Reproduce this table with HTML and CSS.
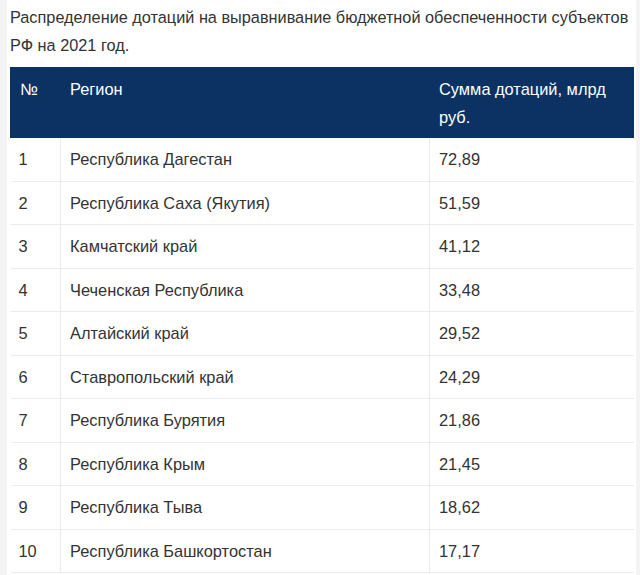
FILE: index.html
```html
<!DOCTYPE html>
<html lang="ru">
<head>
<meta charset="utf-8">
<link rel="stylesheet" href="styles.css">
</head>
<body>
<div class="page">
  <p class="lead">Распределение дотаций на выравнивание бюджетной обеспеченности субъектов РФ на 2021 год.</p>
  <table class="data">
    <thead>
      <tr><th class="c-num">№</th><th class="c-reg">Регион</th><th class="c-sum">Сумма дотаций, млрд руб.</th></tr>
    </thead>
    <tbody>
      <tr><td>1</td><td>Республика Дагестан</td><td>72,89</td></tr>
      <tr><td>2</td><td>Республика Саха (Якутия)</td><td>51,59</td></tr>
      <tr><td>3</td><td>Камчатский край</td><td>41,12</td></tr>
      <tr><td>4</td><td>Чеченская Республика</td><td>33,48</td></tr>
      <tr><td>5</td><td>Алтайский край</td><td>29,52</td></tr>
      <tr><td>6</td><td>Ставропольский край</td><td>24,29</td></tr>
      <tr><td>7</td><td>Республика Бурятия</td><td>21,86</td></tr>
      <tr><td>8</td><td>Республика Крым</td><td>21,45</td></tr>
      <tr><td>9</td><td>Республика Тыва</td><td>18,62</td></tr>
      <tr><td>10</td><td>Республика Башкортостан</td><td>17,17</td></tr>
    </tbody>
  </table>
</div>
</body>
</html>
```
FILE: styles.css
```css
html, body {
  margin: 0;
  padding: 0;
  background: #f4f4f4;
}
body {
  font-family: "Liberation Sans", Arial, sans-serif;
  color: #333;
  font-size: 16.4px;
}
.page {
  background: #fff;
  margin: 0 4px 0 7px;
  padding: 3px 2px 0 3px;
  height: 575px;
  box-sizing: border-box;
}
.lead {
  margin: 0 -2px 8px 0;
  font-size: 16.3px;
  line-height: 28px;
}
.data {
  width: 100%;
  border-collapse: collapse;
}
.data th {
  background: #0b3262;
  color: #fff;
  font-weight: normal;
  text-align: left;
  vertical-align: top;
  padding: 7px 9px 6px 9px;
  line-height: 28px;
  border: 1px solid #0b3262;
  border-left-color: #8ea3bd;
}
.data th:first-child { border-left-color: #0b3262; }
.data td {
  padding: 8px 9px;
  line-height: 26.5px;
  border: 1px solid #ebebeb;
  border-top: none;
}
.data td:first-child { border-left: none; padding-left: 8px; }
.data td:last-child { border-right: none; }
.c-num { width: 31px; }
.c-reg { width: 350px; }
```
